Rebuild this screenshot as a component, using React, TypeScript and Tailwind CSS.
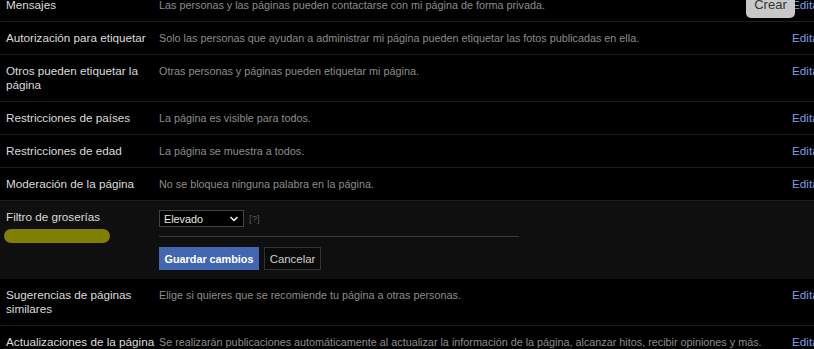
import { ChevronDown } from "lucide-react";

type Row = {
  label: string;
  description: string;
};

const topRows: Row[] = [
  { label: "Mensajes", description: "Las personas y las páginas pueden contactarse con mi página de forma privada." },
  { label: "Autorización para etiquetar", description: "Solo las personas que ayudan a administrar mi página pueden etiquetar las fotos publicadas en ella." },
  { label: "Otros pueden etiquetar la página", description: "Otras personas y páginas pueden etiquetar mi página." },
  { label: "Restricciones de países", description: "La página es visible para todos." },
  { label: "Restricciones de edad", description: "La página se muestra a todos." },
  { label: "Moderación de la página", description: "No se bloquea ninguna palabra en la página." },
];

const bottomRows: Row[] = [
  { label: "Sugerencias de páginas similares", description: "Elige si quieres que se recomiende tu página a otras personas." },
  {
    label: "Actualizaciones de la página",
    description:
      "Se realizarán publicaciones automáticamente al actualizar la información de la página, alcanzar hitos, recibir opiniones y más.",
  },
];

function SettingRow({ row }: { row: Row }) {
  return (
    <div className="flex border-b border-[#1c1c1c] py-[9px] pl-[6px] leading-[14px]">
      <div className="w-[152px] shrink-0 pr-[2px] text-[11.7px] text-[#dcdcdc]">{row.label}</div>
      <div className="ml-[1px] w-[633px] shrink-0 text-[10.8px] text-[#8c8c8c]">{row.description}</div>
      <a className="text-[11.7px] text-[#7b9de0]">Editar</a>
    </div>
  );
}

export default function App() {
  return (
    <div
      className="relative h-[349px] w-[814px] overflow-hidden bg-black text-[12px]"
      style={{ fontFamily: '"Liberation Sans", Arial, sans-serif' }}
    >
      <div className="-mt-[11px] w-[860px]">
        {topRows.map((row) => (
          <SettingRow key={row.label} row={row} />
        ))}

        {/* Expanded row */}
        <div className="flex bg-[#0f0f0f] pb-[9px] pl-[6px] pt-[9px] leading-[14px]">
          <div className="w-[152px] shrink-0">
            <div className="text-[11.7px] text-[#dcdcdc]">Filtro de groserías</div>
            <div className="-ml-[2px] mt-[5px] h-[14px] w-[106px] rounded-full bg-[#808000]" />
          </div>
          <div className="ml-[1px] w-[360px]">
            <div className="flex items-center">
              <div className="flex h-[17px] w-[85px] items-center justify-between border border-[#444] bg-black pl-[4px] pr-[3px] text-[10.8px] text-[#e6e6e6]">
                <span>Elevado</span>
                <ChevronDown size={12} strokeWidth={3.5} className="text-[#e6e6e6]" />
              </div>
              <span className="ml-[5px] text-[9.5px] text-[#5c5c5c]">[?]</span>
            </div>
            <div className="mt-[9px] h-px w-[360px] bg-[#3a3a3a]" />
            <div className="mt-[10px] flex gap-[5px]">
              <button className="h-[23px] w-[100px] border border-[#4267b2] bg-[#4267b2] text-[10.8px] font-bold text-white">
                Guardar cambios
              </button>
              <button className="h-[23px] w-[57px] border border-[#333] bg-[#0a0a0a] text-[11.4px] text-[#cfcfcf]">
                Cancelar
              </button>
            </div>
          </div>
        </div>

        {bottomRows.map((row) => (
          <SettingRow key={row.label} row={row} />
        ))}
      </div>

      {/* Crear tab overlay */}
      <div className="absolute right-[19px] top-[-8px] flex h-[26px] w-[49px] items-end justify-center rounded-b-[5px] bg-[#c8c8c8] pb-[7px] text-[13px] leading-none text-[#333]">
        Crear
      </div>
    </div>
  );
}
